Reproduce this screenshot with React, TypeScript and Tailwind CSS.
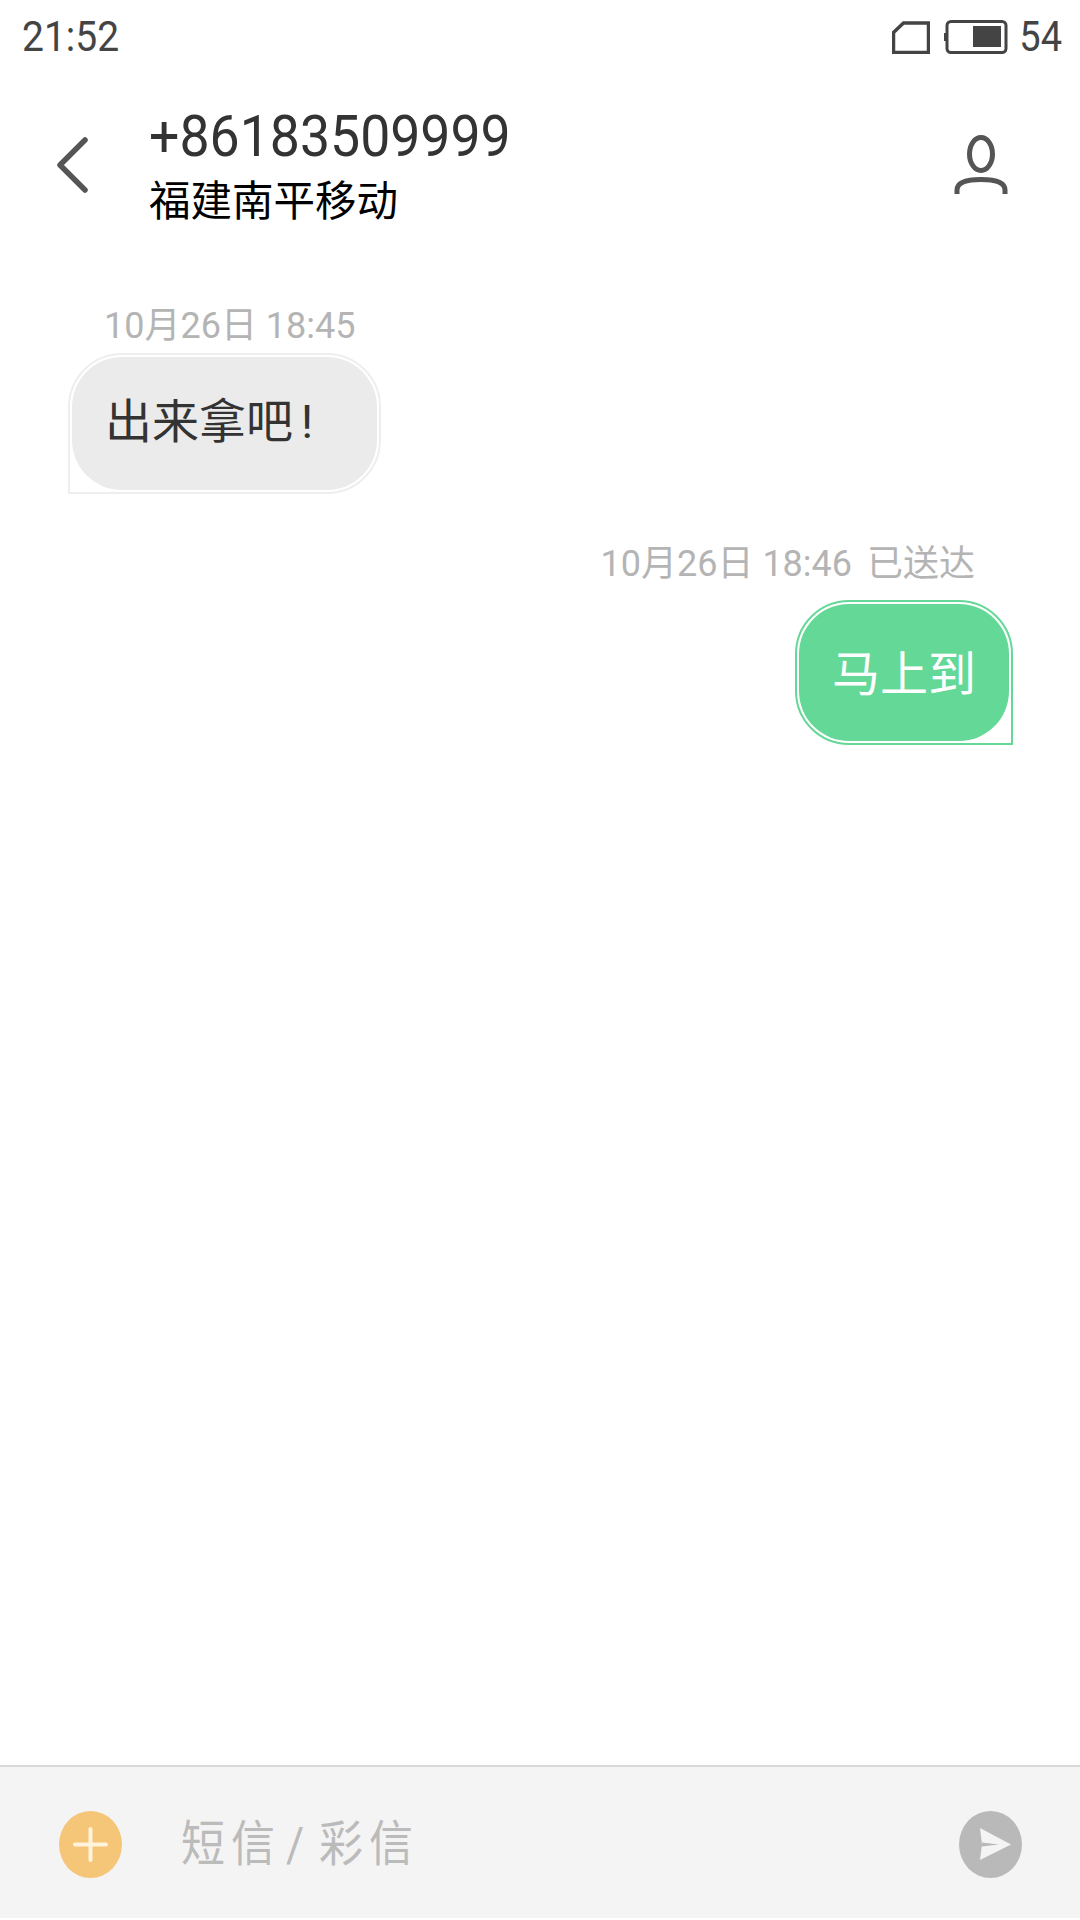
export default function App() {
  const font = { fontFamily: 'Roboto, "Noto Sans CJK SC", sans-serif' };
  return (
    <div style={font} className="w-[1080px] h-[1920px] bg-white flex flex-col overflow-hidden">
      {/* status bar */}
      <div className="h-[74px] pl-[22px] pr-[18px] flex items-center justify-between text-[#444]">
        <span className="text-[39px] leading-[74px] scale-y-[1.08] origin-center">21:52</span>
        <div className="flex items-center">
          <svg width="38" height="33" viewBox="0 0 38 33" className="mr-[14px]">
            <path d="M1.5 31.5V11.5L11.5 2H36.5V31.5Z" fill="none" stroke="#444" strokeWidth="3.5" />
          </svg>
          <svg width="64" height="34" viewBox="0 0 64 34" className="mr-[11px]">
            <rect x="3" y="1.5" width="59" height="31" rx="4" fill="none" stroke="#444" strokeWidth="3" />
            <rect x="0" y="13" width="2" height="8" fill="#444" />
            <rect x="29" y="6" width="28" height="21" fill="#444" />
          </svg>
          <span className="text-[38px] leading-none scale-y-[1.1]">54</span>
        </div>
      </div>

      {/* header */}
      <div className="h-[152px] flex items-start">
        <div className="w-[149px] pl-[55px] pt-[60px] shrink-0">
          <svg width="34" height="60" viewBox="0 0 34 60">
            <path d="M30 6L5 31L30 56" fill="none" stroke="#555" strokeWidth="5.5" strokeLinecap="round" strokeLinejoin="round" />
          </svg>
        </div>
        <div className="flex-1 flex flex-col">
          <div className="text-[53.6px] leading-[66px] mt-[30px] text-[#333] scale-y-[1.08] origin-left">+86183509999</div>
          <div className="text-[41.5px] leading-[48px] mt-[8px] text-black">福建南平移动</div>
        </div>
        <div className="pr-[72px] pt-[61px] shrink-0">
          <svg width="54" height="60" viewBox="0 0 54 60">
            <ellipse cx="27" cy="19" rx="11.5" ry="16.5" fill="none" stroke="#555" strokeWidth="5" />
            <path d="M3 59V55C3 48 12 44.5 27 44.5C42 44.5 51 48 51 55V59" fill="none" stroke="#555" strokeWidth="5" />
          </svg>
        </div>
      </div>

      {/* messages */}
      <div className="flex-1 flex flex-col">
        <div className="pl-[68px] mt-[77px] flex flex-col items-start">
          <div className="ml-[36px] text-[36px] leading-[46px] text-[#b4b4b4]">10月26日 18:45</div>
          <div className="mt-[4px] w-[313px] h-[141px] p-[2px] border-2 border-[#eeeeee] rounded-[54px] rounded-bl-none bg-white">
            <div className="w-full h-full rounded-[50px] bg-[#ebebeb] pl-[33px] pb-[2px] flex items-center text-[47px] text-[#333]">
              出来拿吧<span className="ml-[8px]">!</span>
            </div>
          </div>
        </div>

        <div className="pr-[67px] mt-[47px] flex flex-col items-end">
          <div className="mr-[38px] text-[36px] leading-[46px] text-[#b4b4b4]">
            10月26日 18:46 <span className="ml-[6px]">已送达</span>
          </div>
          <div className="mt-[13px] w-[218px] h-[145px] p-[2px] border-2 border-[#64d897] rounded-[54px] rounded-br-none bg-white">
            <div className="w-full h-full rounded-[50px] bg-[#64d897] pt-[4px] flex items-center justify-center text-[48px] text-white">
              马上到
            </div>
          </div>
        </div>
      </div>

      {/* input bar */}
      <div className="h-[153px] mb-[2px] border-t-2 border-[#d8d8d8] bg-[#f4f4f4] flex items-center pl-[59px] pr-[58px]">
        <svg width="63" height="67" viewBox="0 0 63 67" className="shrink-0 mt-[4px]">
          <ellipse cx="31.5" cy="33.5" rx="31.5" ry="33.5" fill="#f5c578" />
          <path d="M16 33.5H47M31.5 18V49" stroke="#fff3dc" strokeWidth="4" strokeLinecap="round" />
        </svg>
        <span className="flex-1 ml-[59px] mt-[2px] text-[44px] leading-none tracking-[6px] [word-spacing:-12px] text-[#bbbbbb] scale-y-[1.1]">
          短信 / <span className="ml-[4px]">彩信</span>
        </span>
        <svg width="63" height="67" viewBox="0 0 63 67" className="shrink-0 mt-[4px]">
          <ellipse cx="31.5" cy="33.5" rx="31.5" ry="33.5" fill="#b9b9b9" />
          <path d="M21 17L52 33.5L21 49L23 33.5Z" fill="#f4f4f4" />
          <path d="M23 31.5L40 33.5L23 35.5Z" fill="#b9b9b9" />
        </svg>
      </div>
    </div>
  );
}
